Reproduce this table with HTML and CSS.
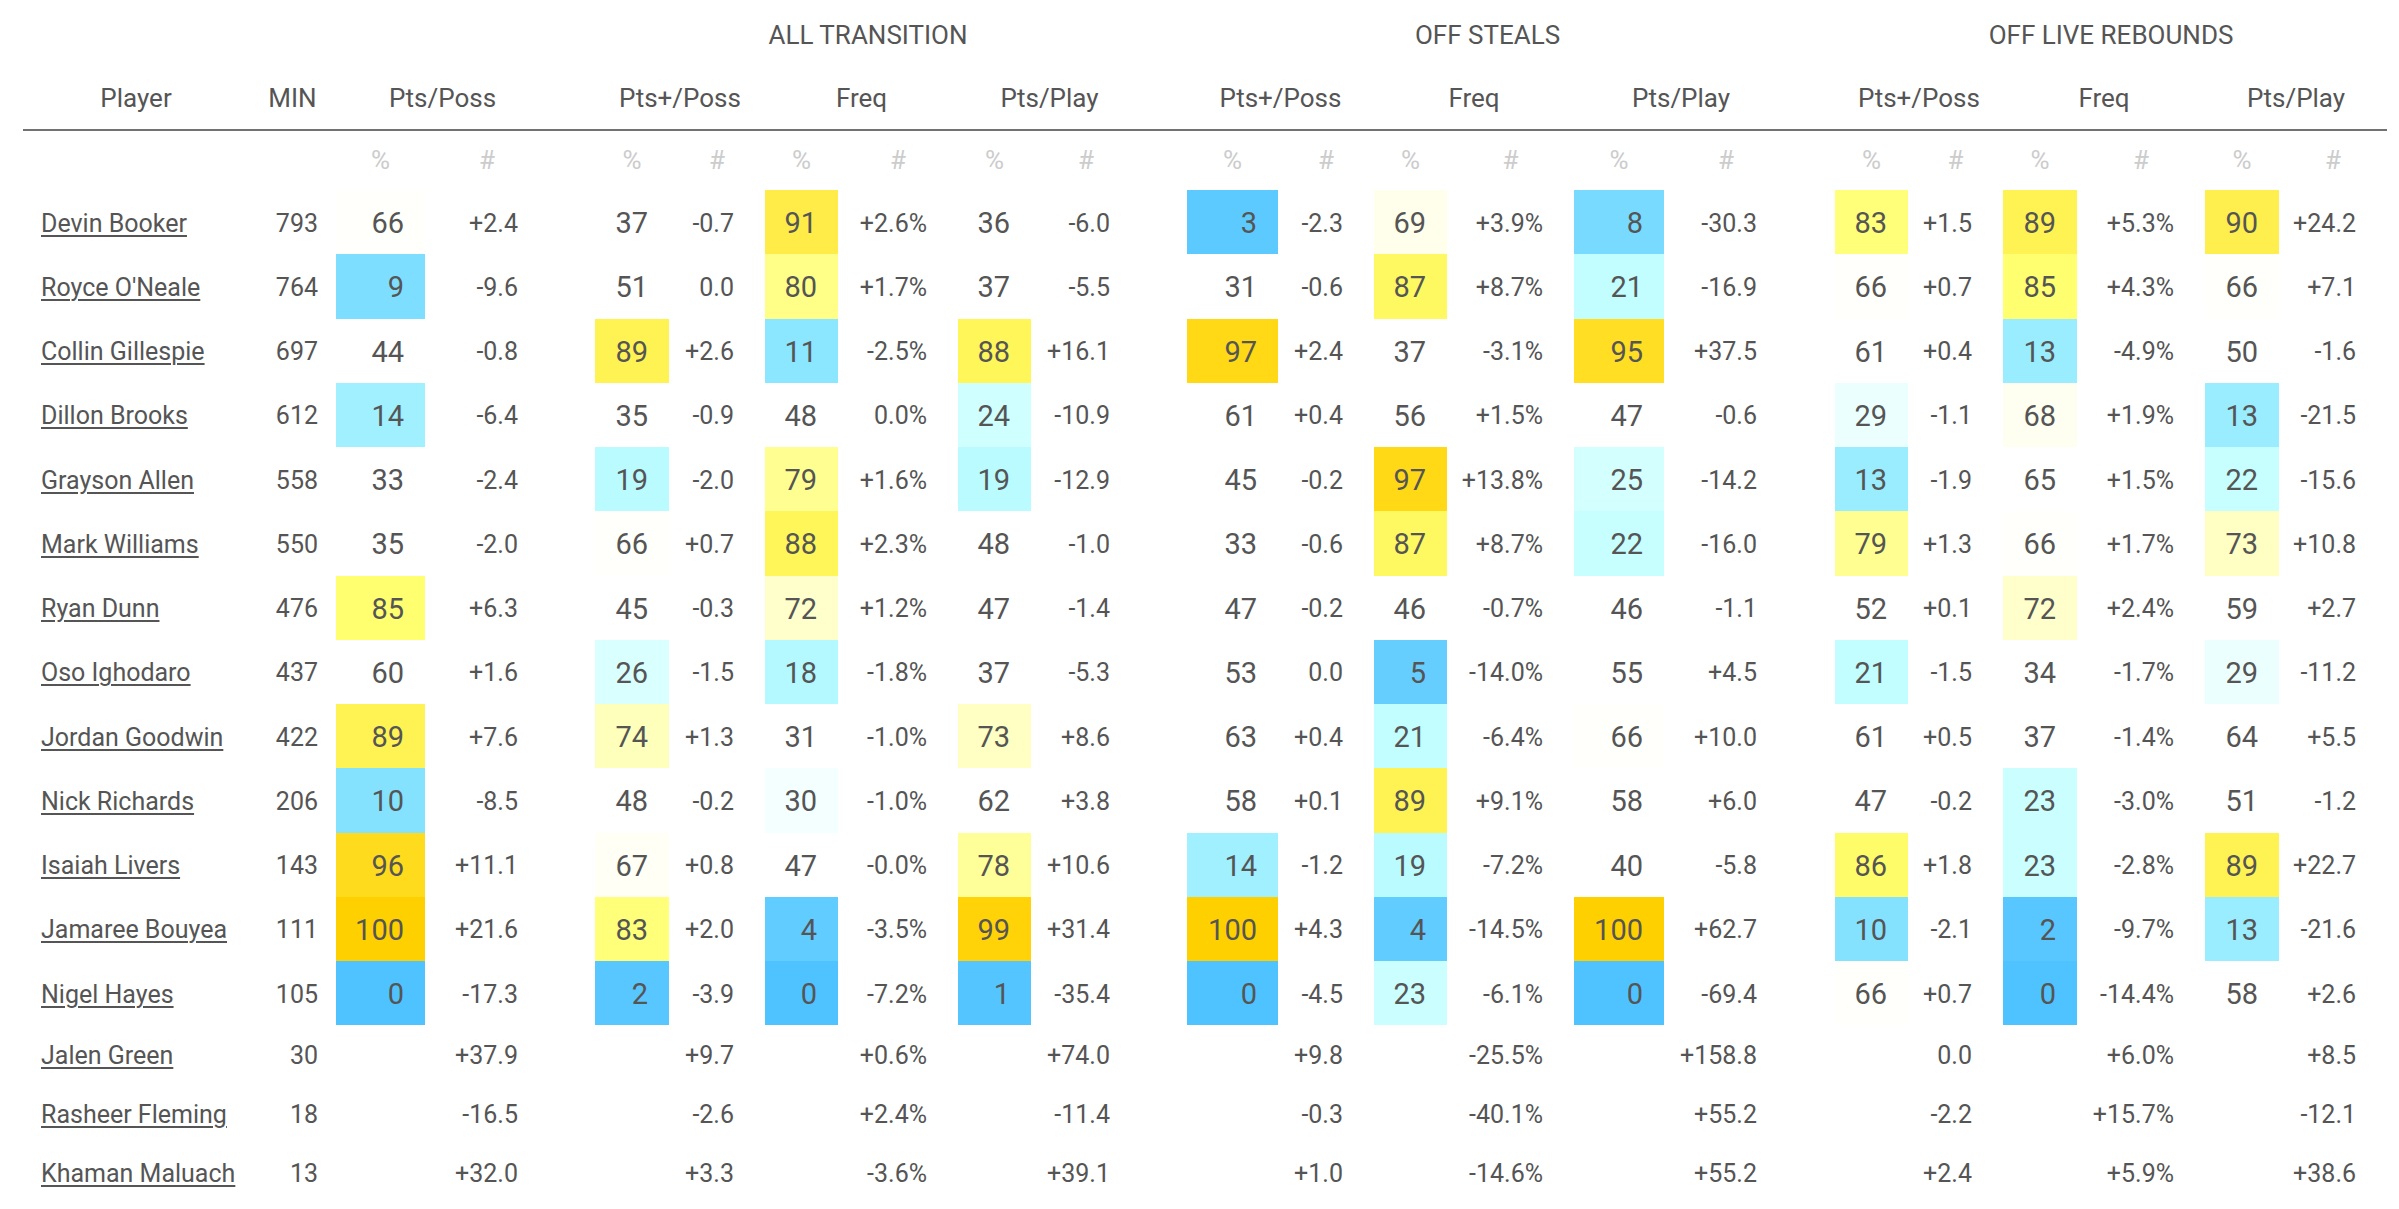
FILE: index.html
```html
<!DOCTYPE html>
<html lang="en">
<head>
<meta charset="utf-8">
<title>Transition Stats</title>
<link rel="stylesheet" href="styles.css">
</head>
<body>
<table class="stats">
  <colgroup>
    <col class="w-player"><col class="w-min">
    <col class="w-89"><col class="w-124">
    <col class="w-sp">
    <col class="w-74"><col class="w-96"><col class="w-73"><col class="w-120"><col class="w-73"><col class="w-110">
    <col class="w-sp">
    <col class="w-91"><col class="w-96"><col class="w-73"><col class="w-127"><col class="w-90"><col class="w-124">
    <col class="w-sp2">
    <col class="w-73"><col class="w-95"><col class="w-74"><col class="w-128"><col class="w-74"><col class="w-108">
  </colgroup>
  <thead>
    <tr class="groups">
      <th colspan="2"></th><th colspan="2"></th><th></th>
      <th colspan="6">ALL TRANSITION</th><th></th>
      <th colspan="6">OFF STEALS</th><th></th>
      <th colspan="6">OFF LIVE REBOUNDS</th>
    </tr>
    <tr class="heads">
      <th>Player</th><th>MIN</th><th colspan="2">Pts/Poss</th><th></th>
      <th colspan="2">Pts+/Poss</th><th colspan="2">Freq</th><th colspan="2">Pts/Play</th><th></th>
      <th colspan="2">Pts+/Poss</th><th colspan="2">Freq</th><th colspan="2">Pts/Play</th><th></th>
      <th colspan="2">Pts+/Poss</th><th colspan="2">Freq</th><th colspan="2">Pts/Play</th>
    </tr>
    <tr class="units">
      <th></th><th></th><th>%</th><th>#</th><th></th>
      <th>%</th><th>#</th><th>%</th><th>#</th><th>%</th><th>#</th><th></th>
      <th>%</th><th>#</th><th>%</th><th>#</th><th>%</th><th>#</th><th></th>
      <th>%</th><th>#</th><th>%</th><th>#</th><th>%</th><th>#</th>
    </tr>
  </thead>
  <tbody>
    <tr class="r"><td class="pl"><a href="#">Devin Booker</a></td><td class="mn">793</td><td class="p">66</td><td class="n">+2.4</td><td></td><td class="p">37</td><td class="n">-0.7</td><td class="p">91</td><td class="n">+2.6%</td><td class="p">36</td><td class="n">-6.0</td><td></td><td class="p">3</td><td class="n">-2.3</td><td class="p">69</td><td class="n">+3.9%</td><td class="p">8</td><td class="n">-30.3</td><td></td><td class="p">83</td><td class="n">+1.5</td><td class="p">89</td><td class="n">+5.3%</td><td class="p">90</td><td class="n">+24.2</td></tr>
    <tr class="r"><td class="pl"><a href="#">Royce O'Neale</a></td><td class="mn">764</td><td class="p">9</td><td class="n">-9.6</td><td></td><td class="p">51</td><td class="n">0.0</td><td class="p">80</td><td class="n">+1.7%</td><td class="p">37</td><td class="n">-5.5</td><td></td><td class="p">31</td><td class="n">-0.6</td><td class="p">87</td><td class="n">+8.7%</td><td class="p">21</td><td class="n">-16.9</td><td></td><td class="p">66</td><td class="n">+0.7</td><td class="p">85</td><td class="n">+4.3%</td><td class="p">66</td><td class="n">+7.1</td></tr>
    <tr class="r"><td class="pl"><a href="#">Collin Gillespie</a></td><td class="mn">697</td><td class="p">44</td><td class="n">-0.8</td><td></td><td class="p">89</td><td class="n">+2.6</td><td class="p">11</td><td class="n">-2.5%</td><td class="p">88</td><td class="n">+16.1</td><td></td><td class="p">97</td><td class="n">+2.4</td><td class="p">37</td><td class="n">-3.1%</td><td class="p">95</td><td class="n">+37.5</td><td></td><td class="p">61</td><td class="n">+0.4</td><td class="p">13</td><td class="n">-4.9%</td><td class="p">50</td><td class="n">-1.6</td></tr>
    <tr class="r"><td class="pl"><a href="#">Dillon Brooks</a></td><td class="mn">612</td><td class="p">14</td><td class="n">-6.4</td><td></td><td class="p">35</td><td class="n">-0.9</td><td class="p">48</td><td class="n">0.0%</td><td class="p">24</td><td class="n">-10.9</td><td></td><td class="p">61</td><td class="n">+0.4</td><td class="p">56</td><td class="n">+1.5%</td><td class="p">47</td><td class="n">-0.6</td><td></td><td class="p">29</td><td class="n">-1.1</td><td class="p">68</td><td class="n">+1.9%</td><td class="p">13</td><td class="n">-21.5</td></tr>
    <tr class="r"><td class="pl"><a href="#">Grayson Allen</a></td><td class="mn">558</td><td class="p">33</td><td class="n">-2.4</td><td></td><td class="p">19</td><td class="n">-2.0</td><td class="p">79</td><td class="n">+1.6%</td><td class="p">19</td><td class="n">-12.9</td><td></td><td class="p">45</td><td class="n">-0.2</td><td class="p">97</td><td class="n">+13.8%</td><td class="p">25</td><td class="n">-14.2</td><td></td><td class="p">13</td><td class="n">-1.9</td><td class="p">65</td><td class="n">+1.5%</td><td class="p">22</td><td class="n">-15.6</td></tr>
    <tr class="r"><td class="pl"><a href="#">Mark Williams</a></td><td class="mn">550</td><td class="p">35</td><td class="n">-2.0</td><td></td><td class="p">66</td><td class="n">+0.7</td><td class="p">88</td><td class="n">+2.3%</td><td class="p">48</td><td class="n">-1.0</td><td></td><td class="p">33</td><td class="n">-0.6</td><td class="p">87</td><td class="n">+8.7%</td><td class="p">22</td><td class="n">-16.0</td><td></td><td class="p">79</td><td class="n">+1.3</td><td class="p">66</td><td class="n">+1.7%</td><td class="p">73</td><td class="n">+10.8</td></tr>
    <tr class="r"><td class="pl"><a href="#">Ryan Dunn</a></td><td class="mn">476</td><td class="p">85</td><td class="n">+6.3</td><td></td><td class="p">45</td><td class="n">-0.3</td><td class="p">72</td><td class="n">+1.2%</td><td class="p">47</td><td class="n">-1.4</td><td></td><td class="p">47</td><td class="n">-0.2</td><td class="p">46</td><td class="n">-0.7%</td><td class="p">46</td><td class="n">-1.1</td><td></td><td class="p">52</td><td class="n">+0.1</td><td class="p">72</td><td class="n">+2.4%</td><td class="p">59</td><td class="n">+2.7</td></tr>
    <tr class="r"><td class="pl"><a href="#">Oso Ighodaro</a></td><td class="mn">437</td><td class="p">60</td><td class="n">+1.6</td><td></td><td class="p">26</td><td class="n">-1.5</td><td class="p">18</td><td class="n">-1.8%</td><td class="p">37</td><td class="n">-5.3</td><td></td><td class="p">53</td><td class="n">0.0</td><td class="p">5</td><td class="n">-14.0%</td><td class="p">55</td><td class="n">+4.5</td><td></td><td class="p">21</td><td class="n">-1.5</td><td class="p">34</td><td class="n">-1.7%</td><td class="p">29</td><td class="n">-11.2</td></tr>
    <tr class="r"><td class="pl"><a href="#">Jordan Goodwin</a></td><td class="mn">422</td><td class="p">89</td><td class="n">+7.6</td><td></td><td class="p">74</td><td class="n">+1.3</td><td class="p">31</td><td class="n">-1.0%</td><td class="p">73</td><td class="n">+8.6</td><td></td><td class="p">63</td><td class="n">+0.4</td><td class="p">21</td><td class="n">-6.4%</td><td class="p">66</td><td class="n">+10.0</td><td></td><td class="p">61</td><td class="n">+0.5</td><td class="p">37</td><td class="n">-1.4%</td><td class="p">64</td><td class="n">+5.5</td></tr>
    <tr class="r"><td class="pl"><a href="#">Nick Richards</a></td><td class="mn">206</td><td class="p">10</td><td class="n">-8.5</td><td></td><td class="p">48</td><td class="n">-0.2</td><td class="p">30</td><td class="n">-1.0%</td><td class="p">62</td><td class="n">+3.8</td><td></td><td class="p">58</td><td class="n">+0.1</td><td class="p">89</td><td class="n">+9.1%</td><td class="p">58</td><td class="n">+6.0</td><td></td><td class="p">47</td><td class="n">-0.2</td><td class="p">23</td><td class="n">-3.0%</td><td class="p">51</td><td class="n">-1.2</td></tr>
    <tr class="r"><td class="pl"><a href="#">Isaiah Livers</a></td><td class="mn">143</td><td class="p">96</td><td class="n">+11.1</td><td></td><td class="p">67</td><td class="n">+0.8</td><td class="p">47</td><td class="n">-0.0%</td><td class="p">78</td><td class="n">+10.6</td><td></td><td class="p">14</td><td class="n">-1.2</td><td class="p">19</td><td class="n">-7.2%</td><td class="p">40</td><td class="n">-5.8</td><td></td><td class="p">86</td><td class="n">+1.8</td><td class="p">23</td><td class="n">-2.8%</td><td class="p">89</td><td class="n">+22.7</td></tr>
    <tr class="r"><td class="pl"><a href="#">Jamaree Bouyea</a></td><td class="mn">111</td><td class="p">100</td><td class="n">+21.6</td><td></td><td class="p">83</td><td class="n">+2.0</td><td class="p">4</td><td class="n">-3.5%</td><td class="p">99</td><td class="n">+31.4</td><td></td><td class="p">100</td><td class="n">+4.3</td><td class="p">4</td><td class="n">-14.5%</td><td class="p">100</td><td class="n">+62.7</td><td></td><td class="p">10</td><td class="n">-2.1</td><td class="p">2</td><td class="n">-9.7%</td><td class="p">13</td><td class="n">-21.6</td></tr>
    <tr class="r"><td class="pl"><a href="#">Nigel Hayes</a></td><td class="mn">105</td><td class="p">0</td><td class="n">-17.3</td><td></td><td class="p">2</td><td class="n">-3.9</td><td class="p">0</td><td class="n">-7.2%</td><td class="p">1</td><td class="n">-35.4</td><td></td><td class="p">0</td><td class="n">-4.5</td><td class="p">23</td><td class="n">-6.1%</td><td class="p">0</td><td class="n">-69.4</td><td></td><td class="p">66</td><td class="n">+0.7</td><td class="p">0</td><td class="n">-14.4%</td><td class="p">58</td><td class="n">+2.6</td></tr>
    <tr class="e"><td class="pl"><a href="#">Jalen Green</a></td><td class="mn">30</td><td class="p"></td><td class="n">+37.9</td><td></td><td class="p"></td><td class="n">+9.7</td><td class="p"></td><td class="n">+0.6%</td><td class="p"></td><td class="n">+74.0</td><td></td><td class="p"></td><td class="n">+9.8</td><td class="p"></td><td class="n">-25.5%</td><td class="p"></td><td class="n">+158.8</td><td></td><td class="p"></td><td class="n">0.0</td><td class="p"></td><td class="n">+6.0%</td><td class="p"></td><td class="n">+8.5</td></tr>
    <tr class="e"><td class="pl"><a href="#">Rasheer Fleming</a></td><td class="mn">18</td><td class="p"></td><td class="n">-16.5</td><td></td><td class="p"></td><td class="n">-2.6</td><td class="p"></td><td class="n">+2.4%</td><td class="p"></td><td class="n">-11.4</td><td></td><td class="p"></td><td class="n">-0.3</td><td class="p"></td><td class="n">-40.1%</td><td class="p"></td><td class="n">+55.2</td><td></td><td class="p"></td><td class="n">-2.2</td><td class="p"></td><td class="n">+15.7%</td><td class="p"></td><td class="n">-12.1</td></tr>
    <tr class="e"><td class="pl"><a href="#">Khaman Maluach</a></td><td class="mn">13</td><td class="p"></td><td class="n">+32.0</td><td></td><td class="p"></td><td class="n">+3.3</td><td class="p"></td><td class="n">-3.6%</td><td class="p"></td><td class="n">+39.1</td><td></td><td class="p"></td><td class="n">+1.0</td><td class="p"></td><td class="n">-14.6%</td><td class="p"></td><td class="n">+55.2</td><td></td><td class="p"></td><td class="n">+2.4</td><td class="p"></td><td class="n">+5.9%</td><td class="p"></td><td class="n">+38.6</td></tr>
  </tbody>
</table>
<script src="script.js"></script>
</body>
</html>
```

FILE: styles.css
```css
* { box-sizing: border-box; }

html, body {
  margin: 0;
  padding: 0;
  background: #ffffff;
}

body {
  font-family: Roboto, "Noto Sans", "Liberation Sans", sans-serif;
  color: #555555;
}

.stats {
  table-layout: fixed;
  width: 2364px;
  margin-left: 23px;
  border-collapse: separate;
  border-spacing: 0;
}

.w-player { width: 226px; }
.w-min { width: 87px; }
.w-sp { width: 46px; }
.w-sp2 { width: 47px; }
.w-73 { width: 73px; }
.w-74 { width: 74px; }
.w-89 { width: 89px; }
.w-90 { width: 90px; }
.w-91 { width: 91px; }
.w-95 { width: 95px; }
.w-96 { width: 96px; }
.w-108 { width: 108px; }
.w-110 { width: 110px; }
.w-120 { width: 120px; }
.w-124 { width: 124px; }
.w-127 { width: 127px; }
.w-128 { width: 128px; }

.stats th,
.stats td {
  padding: 0;
  font-weight: 400;
  white-space: nowrap;
  vertical-align: middle;
  line-height: 1.2;
}

.groups { height: 68px; }
.groups th {
  font-size: 26px;
  text-align: center;
  color: #555555;
  padding-top: 3px;
}

.heads { height: 63px; }
.heads th {
  font-size: 26px;
  text-align: center;
  border-bottom: 2px solid #727272;
  padding-top: 1px;
}

.units { height: 59px; }
.units th {
  font-size: 26px;
  text-align: center;
  color: #cccccc;
}

.stats tr.r { height: 64.25px; }
.stats tr.e { height: 59px; }

.stats tbody td { padding-top: 3px; }

td.pl {
  padding-left: 18px;
  text-align: left;
  font-size: 25px;
}

td.pl a {
  color: #555555;
  text-decoration: underline;
  text-decoration-thickness: 1.5px;
  text-underline-offset: 3px;
}

td.mn {
  padding-right: 18px;
  text-align: right;
  font-size: 25px;
}

td.p {
  padding-right: 21px;
  text-align: right;
  font-size: 29px;
}

td.n {
  padding-right: 31px;
  text-align: right;
  font-size: 25px;
}
```

FILE: script.js
```js
(function () {
  var stops = [
    [0, [79, 195, 255]],
    [5, [102, 206, 255]],
    [10, [132, 226, 255]],
    [14, [160, 240, 255]],
    [20, [190, 253, 255]],
    [25, [212, 255, 255]],
    [29, [236, 255, 255]],
    [30, [244, 255, 255]],
    [31, [255, 255, 255]],
    [65, [255, 255, 255]],
    [66, [255, 255, 251]],
    [69, [255, 255, 236]],
    [72, [255, 255, 204]],
    [75, [255, 255, 180]],
    [80, [255, 255, 136]],
    [85, [255, 255, 112]],
    [88, [255, 246, 90]],
    [91, [255, 236, 72]],
    [95, [255, 222, 36]],
    [100, [255, 208, 0]]
  ];

  function colorFor(v) {
    for (var i = 1; i < stops.length; i++) {
      if (v <= stops[i][0]) {
        var a = stops[i - 1], b = stops[i];
        var t = (v - a[0]) / (b[0] - a[0]);
        var c = [0, 1, 2].map(function (k) {
          return Math.round(a[1][k] + (b[1][k] - a[1][k]) * t);
        });
        return 'rgb(' + c.join(',') + ')';
      }
    }
    return 'rgb(255,208,0)';
  }

  var cells = document.querySelectorAll('td.p');
  for (var i = 0; i < cells.length; i++) {
    var txt = cells[i].textContent.trim();
    if (txt === '') continue;
    cells[i].style.backgroundColor = colorFor(parseFloat(txt));
  }
})();
```
